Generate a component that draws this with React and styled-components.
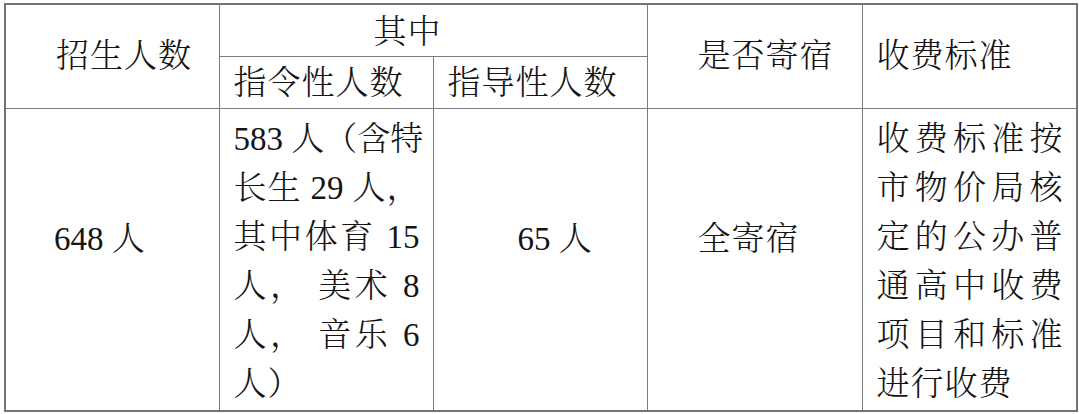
import React from "react";
import styled, { createGlobalStyle } from "styled-components";

const FONT = `"Liberation Serif", "Noto Serif CJK SC", "Noto Sans CJK SC", serif`;

const Global = createGlobalStyle`
  html, body { margin: 0; padding: 0; background: #fff; }
  body {
    font-family: ${FONT};
    color: #141414;
  }
`;

const Page = styled.div`
  padding: 3px 0 0 4px;
`;

const Table = styled.table`
  border-collapse: collapse;
  table-layout: fixed;
  width: 1072px;
  border: 2px solid #747474;
  font-family: ${FONT};
  color: #141414;
`;

const Col = styled.col`
  width: ${(p) => p.$w}px;
`;

const HeadRow = styled.tr`
  height: 52px;
`;

const BodyRow = styled.tr`
  height: 303px;
`;

const Cell = styled.td`
  border: 1.5px solid #7c7c7c;
  padding: ${(p) => p.$pt || 0}px 0 0 ${(p) => p.$pl || 0}px;
  vertical-align: ${(p) => (p.$top ? "top" : "middle")};
  font-family: ${FONT};
  font-size: 33px;
  font-weight: 300;
  line-height: ${(p) => p.$lh || 46}px;
  letter-spacing: ${(p) => (p.$ls === undefined ? 1 : p.$ls)}px;
  white-space: nowrap;
  text-align: left;
  color: #141414;
`;

const Lines = styled.div`
  width: ${(p) => p.$w}px;
`;

const Line = styled.div`
  height: 49px;
  line-height: 49px;
  white-space: nowrap;
  text-align: ${(p) => (p.$last ? "left" : "justify")};
  text-align-last: ${(p) => (p.$last ? "left" : "justify")};
  letter-spacing: ${(p) => (p.$last ? 1 : 0)}px;
`;

const quota = ["583 人（含特", "长生 29 人，", "其中体育 15", "人， 美术 8", "人， 音乐 6", "人）"];
const fee = ["收费标准按", "市物价局核", "定的公办普", "通高中收费", "项目和标准", "进行收费"];

function LineBlock({ lines }) {
  return (
    <Lines $w={186}>
      {lines.map((l, i) => (
        <Line key={i} $last={i === lines.length - 1}>
          {l}
        </Line>
      ))}
    </Lines>
  );
}

export default function App() {
  return (
    <Page>
      <Global />
      <Table>
        <colgroup>
          <Col $w={214} />
          <Col $w={214} />
          <Col $w={214} />
          <Col $w={215} />
          <Col $w={215} />
        </colgroup>
        <tbody>
          <HeadRow>
            <Cell rowSpan={2} $pl={50}>招生人数</Cell>
            <Cell colSpan={2} $pl={154} $pt={4}>其中</Cell>
            <Cell rowSpan={2} $pl={50}>是否寄宿</Cell>
            <Cell rowSpan={2} $pl={14}>收费标准</Cell>
          </HeadRow>
          <HeadRow>
            <Cell $pl={14} $pt={1}>指令性人数</Cell>
            <Cell $pl={14} $pt={1}>指导性人数</Cell>
          </HeadRow>
          <BodyRow>
            <Cell $top $lh={49} $pt={106} $pl={48} $ls={0}>648 人</Cell>
            <Cell $top $pt={6} $pl={14}>
              <LineBlock lines={quota} />
            </Cell>
            <Cell $top $lh={49} $pt={106} $pl={84} $ls={0}>65 人</Cell>
            <Cell $top $lh={49} $pt={106} $pl={50}>全寄宿</Cell>
            <Cell $top $pt={6} $pl={14}>
              <LineBlock lines={fee} />
            </Cell>
          </BodyRow>
        </tbody>
      </Table>
    </Page>
  );
}
